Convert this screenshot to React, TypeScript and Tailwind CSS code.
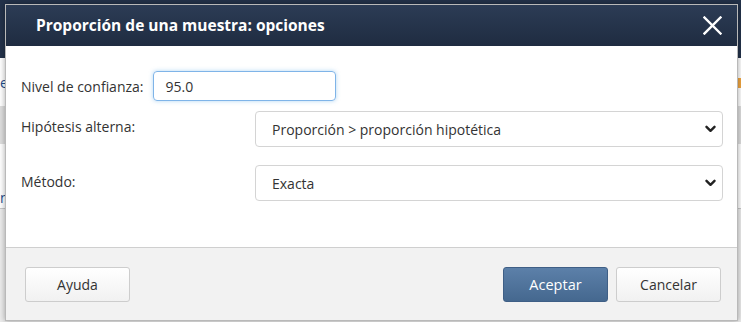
import React from 'react';

const font = { fontFamily: '"Open Sans", "Noto Sans", "Liberation Sans", sans-serif' };

function Chevron() {
  return (
    <svg width="11" height="8" viewBox="0 0 11 8" className="shrink-0">
      <path d="M1.5 1.8 L5.5 5.8 L9.5 1.8" fill="none" stroke="#222" strokeWidth="2.4" strokeLinecap="round" strokeLinejoin="round" />
    </svg>
  );
}

function SelectBox({ value }: { value: string }) {
  return (
    <div className="flex h-[36px] w-[468px] items-center justify-between rounded-[4px] border border-[#d4d4d4] bg-white pl-[16px] pr-[6px] text-[14px] text-[#333]">
      <span>{value}</span>
      <Chevron />
    </div>
  );
}

export default function App() {
  return (
    <div className="relative h-[322px] w-[741px] overflow-hidden bg-white" style={font}>
      {/* page behind the dialog */}
      <div className="h-[58px] bg-[#23324a]" />
      <div className="flex h-[48px] items-center text-[14px] text-[#1f4e8c]">e</div>
      <div className="h-[38px] bg-[#dedede]" />
      <div className="flex h-[64px] items-end text-[14px] text-[#1f4e8c]">n</div>
      <div className="h-[114px] border-t border-[#c8c8c8] bg-[#ececec]" />
      <div className="absolute right-0 top-[78px] h-[10px] w-[4px] bg-[#f0a640]" />

      {/* dialog */}
      <div className="absolute left-[5px] top-[4px] flex h-[317px] w-[733px] flex-col border border-[#b9b9b9] bg-white shadow-[0_0_6px_rgba(0,0,0,0.35)]">
        <div className="flex h-[41px] shrink-0 items-center justify-between bg-gradient-to-b from-[#2c3c55] to-[#1f2c41] pl-[30px] pr-[14px]">
          <span className="text-[15.5px] font-bold text-white">Proporción de una muestra: opciones</span>
          <svg width="19" height="19" viewBox="0 0 19 19" className="mr-[1px]">
            <path d="M1.5 1.5 L17.5 17.5 M17.5 1.5 L1.5 17.5" stroke="#fff" strokeWidth="2.4" strokeLinecap="square" />
          </svg>
        </div>

        <div className="flex h-[201px] shrink-0 flex-col pl-[15px] pr-[14px] pt-[25px] text-[14px] text-[#333]">
          <div className="flex items-center gap-[9px]">
            <span>Nivel de confianza:</span>
            <div className="flex h-[30px] w-[183px] items-center rounded-[4px] border border-[#7fb4e8] pl-[12px] shadow-[0_0_4px_rgba(102,175,233,0.5)]">
              95.0
            </div>
          </div>
          <div className="mt-[10px] grid grid-cols-[234px_1fr] gap-y-[18px]">
            <span className="self-start pt-[5px]">Hipótesis alterna:</span>
            <SelectBox value="Proporción > proporción hipotética" />
            <span className="self-start pt-[6px]">Método:</span>
            <SelectBox value="Exacta" />
          </div>
        </div>

        <div className="flex flex-1 items-start justify-between border-t border-[#cfcfcf] bg-[#f2f2f2] pl-[19px] pr-[16px] pt-[19px] text-[14px]">
          <button className="h-[35px] w-[105px] rounded-[3px] border border-[#cdcdcd] bg-gradient-to-b from-white to-[#f1f1f1] text-[#333]">
            Ayuda
          </button>
          <div className="flex gap-[8px]">
            <button className="h-[35px] w-[105px] rounded-[3px] border border-[#3f5f86] bg-gradient-to-b from-[#5c80a9] to-[#45688f] text-[14.5px] text-white">
              Aceptar
            </button>
            <button className="h-[35px] w-[105px] rounded-[3px] border border-[#cdcdcd] bg-gradient-to-b from-white to-[#f1f1f1] text-[#333]">
              Cancelar
            </button>
          </div>
        </div>
      </div>
    </div>
  );
}
